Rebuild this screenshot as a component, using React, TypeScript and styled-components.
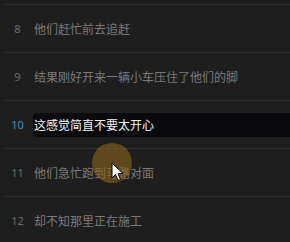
import React from "react";
import styled, { createGlobalStyle } from "styled-components";

const Global = createGlobalStyle`
  html, body { margin: 0; padding: 0; background: #1e1e1e; }
  body { width: 290px; height: 242px; overflow: hidden; font-family: "Noto Sans CJK SC", "Noto Sans", sans-serif; }
`;

const Page = styled.div`
  position: relative;
  width: 290px;
  height: 242px;
  background: #1e1e1e;
  overflow: hidden;
  padding-top: 4px;
  box-sizing: border-box;
`;

const List = styled.div`
  margin-left: 5px;
  display: flex;
  flex-direction: column;
`;

const Row = styled.div`
  height: 48px;
  box-sizing: border-box;
  border-top: 1px solid #333333;
  display: flex;
  align-items: center;
`;

const Num = styled.div<{ $active?: boolean }>`
  width: 25px;
  text-align: center;
  font-family: "Noto Sans", sans-serif;
  font-size: 11px;
  color: ${(p) => (p.$active ? "#3f8fbd" : "#6c6c6c")};
  flex-shrink: 0;
`;

const Text = styled.div<{ $active?: boolean }>`
  flex: 1;
  margin-left: 3px;
  padding-left: 1px;
  height: 24px;
  line-height: 24px;
  font-size: 12px;
  white-space: nowrap;
  color: ${(p) => (p.$active ? "#f2f2f2" : "#7a7a7a")};
  background: ${(p) => (p.$active ? "#0b0b0d" : "transparent")};
  border-radius: 4px 0 0 4px;
`;

const Click = styled.div`
  position: absolute;
  left: 92px;
  top: 143px;
  width: 40px;
  height: 40px;
  border-radius: 50%;
  background: rgba(135, 100, 28, 0.62);
`;

const Cursor = styled.svg`
  position: absolute;
  left: 111px;
  top: 162px;
`;

const rows = [
  { n: 8, t: "他们赶忙前去追赶" },
  { n: 9, t: "结果刚好开来一辆小车压住了他们的脚" },
  { n: 10, t: "这感觉简直不要太开心", active: true },
  { n: 11, t: "他们急忙跑到马路对面" },
  { n: 12, t: "却不知那里正在施工" },
];

export default function App() {
  return (
    <Page>
      <Global />
      <List>
        {rows.map((r) => (
          <Row key={r.n}>
            <Num $active={r.active}>{r.n}</Num>
            <Text $active={r.active}>{r.t}</Text>
          </Row>
        ))}
      </List>
      <Click />
      <Cursor width="13" height="20" viewBox="0 0 13 20">
        <path
          d="M1 1 L1 16 L4.5 12.5 L7 18.5 L9.5 17.5 L7 11.5 L12 11.5 Z"
          fill="#ffffff"
          stroke="#000000"
          strokeWidth="1"
          strokeLinejoin="round"
        />
      </Cursor>
    </Page>
  );
}
